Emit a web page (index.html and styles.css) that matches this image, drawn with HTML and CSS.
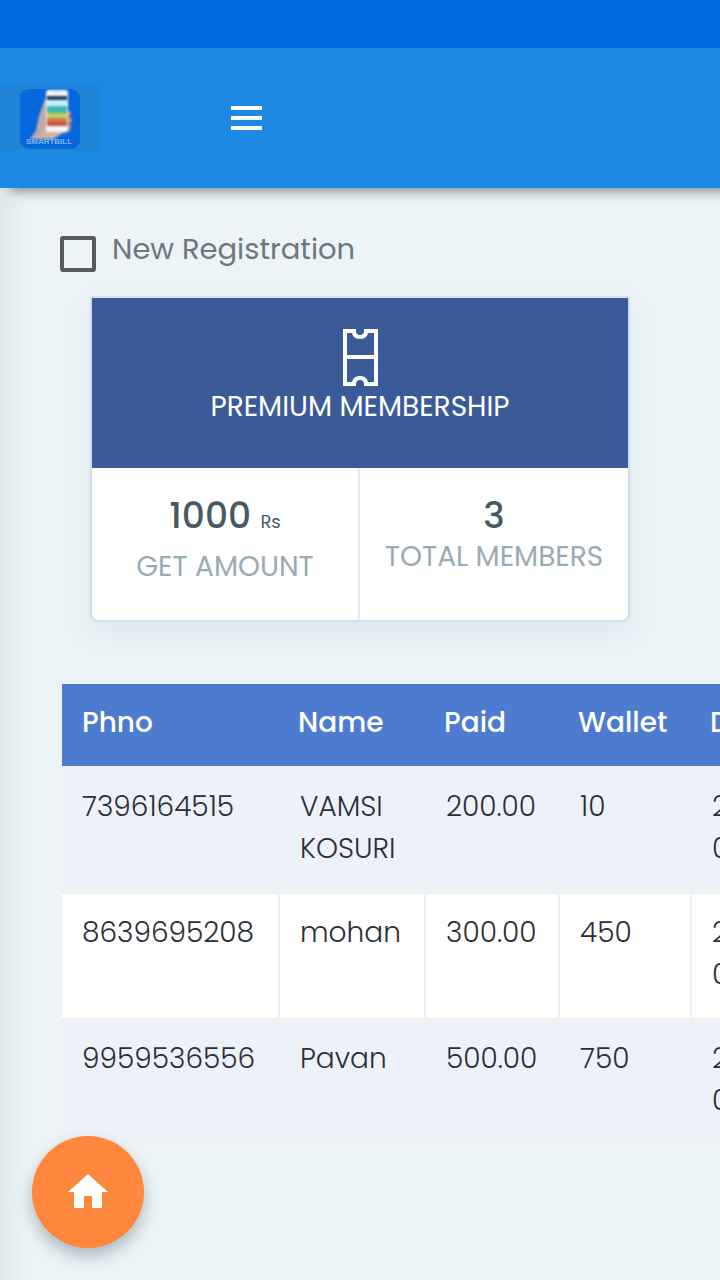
FILE: index.html
```html
<!DOCTYPE html>
<html lang="en">
<head>
<meta charset="utf-8">
<meta name="viewport" content="width=device-width, initial-scale=1">
<title>Premium Membership</title>
<link rel="stylesheet" href="styles.css">
</head>
<body>
<div class="status-bar"></div>
<header class="topbar">
  <a class="brand" href="#" aria-label="Home page">
    <svg class="logo" viewBox="0 0 60 60" aria-hidden="true">
      <rect width="60" height="60" rx="9" fill="#0767dc"/>
      <g class="logo-art">
        <path d="M25 10 L27 11 V38 H42 L49 38 L50 42 L43 44 L33 50 H14 L10 50 L16 42 L19 27 Z" fill="#d3b3a6"/>
        <path d="M25 12 L26 36 L18 49 H11 L18 40 L20 27 Z" fill="#bda8ac"/>
        <rect x="46" y="22" width="5" height="5" rx="2" fill="#c99078"/>
        <rect x="46" y="28" width="6" height="6" rx="2" fill="#c98d76"/>
        <rect x="46" y="35" width="5" height="6" rx="2" fill="#c98d76"/>
        <rect x="26" y="1" width="22" height="42" rx="3" fill="#f3f6fb"/>
        <rect x="33" y="3" width="8" height="1" fill="#c8d3dc"/>
        <rect x="27" y="7" width="20" height="4" fill="#203c50"/>
        <rect x="27" y="12" width="20" height="4" fill="#bcefff"/>
        <rect x="27" y="17" width="20" height="3" fill="#36b7c4"/>
        <rect x="27" y="20" width="20" height="4" fill="#41b7a4"/>
        <rect x="27" y="24" width="20" height="5" fill="#c4ce60"/>
        <rect x="27" y="29" width="20" height="4" fill="#d9784b"/>
        <rect x="27" y="33" width="20" height="4" fill="#bf563e"/>
      </g>
      <text class="logo-text" x="29" y="55" text-anchor="middle">SMARTBILL</text>
    </svg>
  </a>
  <button class="menu-button" type="button" aria-label="Open menu">
    <svg class="menu-icon" viewBox="0 0 31 24" aria-hidden="true"><path d="M0 2h31M0 12h31M0 22h31" stroke="#fff" stroke-width="4"/></svg>
  </button>
</header>
<main class="page">
  <div class="check-row">
    <input class="check-box" type="checkbox" id="new-registration">
    <label class="check-label" for="new-registration">New Registration</label>
  </div>
  <section class="card">
    <div class="card-head">
      <svg class="ticket-icon" viewBox="0 0 36 58" aria-hidden="true"><path d="M3 2H12Q12 8 18 8T24 2H34V55H24Q24 49 18 49T12 55H3ZM3 28H34" fill="none" stroke="#fff" stroke-width="4"/></svg>
      <h1 class="card-title">PREMIUM MEMBERSHIP</h1>
    </div>
    <div class="stats">
      <div class="stat stat-amount">
        <div class="stat-value">1000 <small class="unit">Rs</small></div>
        <div class="stat-label">GET AMOUNT</div>
      </div>
      <div class="stat">
        <div class="stat-value">3</div>
        <div class="stat-label">TOTAL MEMBERS</div>
      </div>
    </div>
  </section>
  <div class="table-scroll">
    <table class="members">
      <colgroup><col class="col-phone"><col class="col-name"><col class="col-paid"><col class="col-wallet"><col class="col-date"></colgroup>
      <thead>
        <tr><th scope="col">Phno</th><th scope="col">Name</th><th scope="col">Paid</th><th scope="col">Wallet</th><th scope="col">Date</th></tr>
      </thead>
      <tbody>
        <tr><td>7396164515</td><td>VAMSI KOSURI</td><td>200.00</td><td>10</td><td>2019<br>07:10</td></tr>
        <tr><td>8639695208</td><td>mohan</td><td>300.00</td><td>450</td><td>2019<br>07:10</td></tr>
        <tr><td>9959536556</td><td>Pavan</td><td>500.00</td><td>750</td><td>2019<br>07:10</td></tr>
      </tbody>
    </table>
  </div>
</main>
<button class="home-button" type="button" aria-label="Home">
  <svg class="home-icon" viewBox="0 0 40 34" aria-hidden="true"><path d="M20 0L0 18H6V34H16V22H24V34H34V18H40Z" fill="#fff"/></svg>
</button>
</body>
</html>
```
FILE: styles.css
```css
* { box-sizing: border-box; }

body {
  margin: 0;
  min-height: 100vh;
  display: flex;
  flex-direction: column;
  background: #ecf4f8;
  font-family: Poppins, Inter, "Open Sans", sans-serif;
  font-size: 28px;
  font-weight: 300;
  line-height: 42px;
  color: #2b2f36;
}

/* the bars stack over the page so that only the lower shadow shows */
.status-bar {
  position: relative;
  z-index: 2;
  height: 48px;
  background: #0069df;
}

.topbar {
  position: relative;
  z-index: 1;
  display: flex;
  align-items: center;
  gap: 124px;
  height: 140px;
  background: #1e88e5;
  box-shadow: 10px 2px 12px rgba(0, 0, 0, 0.5);
}

.brand {
  display: flex;
  width: 100px;
  padding: 4px 20px 2px;
  background: #1f83d6;
}

.logo { display: block; width: 60px; height: 60px; }
.logo-art { filter: blur(1px); }

.logo-text {
  font-family: "Liberation Sans", sans-serif;
  font-size: 8px;
  font-weight: 700;
  fill: #7db4f2;
}

.menu-button {
  display: flex;
  padding: 7px;
  border: 0;
  background: transparent;
}

.menu-icon { display: block; width: 31px; height: 24px; }

.page {
  flex: 1;
  padding: 38px 0 60px;
  background: linear-gradient(to right, #dfe8eb, #ecf4f8 28px);
}

.check-row {
  display: flex;
  align-items: flex-start;
  gap: 16px;
  padding-left: 60px;
}

.check-box {
  appearance: none;
  width: 36px;
  height: 36px;
  margin: 10px 0 0;
  border: 4px solid #5a5a5a;
  border-radius: 3px;
}

.check-label { padding-top: 2px; font-size: 29px; font-weight: 400; color: #6b787d; }

.card {
  margin: 24px 90px 62px;
  border: 2px solid #d3dfe7;
  border-radius: 2px 2px 8px 8px;
  background: #fff;
  box-shadow: 0 10px 32px rgba(70, 100, 120, 0.09);
}

.card-head {
  display: flex;
  flex-direction: column;
  align-items: center;
  height: 170px;
  padding-top: 31px;
  background: #3b5a98;
}

.ticket-icon { display: block; width: 36px; height: 58px; }

.card-title {
  margin: 0;
  font-size: 28px;
  font-weight: 400;
  line-height: 40px;
  color: #fff;
}

.stats { display: grid; grid-template-columns: 1fr 1fr; min-height: 152px; }
.stat { padding-top: 26px; text-align: center; white-space: nowrap; }
.stat-amount { border-right: 2px solid #e8ebee; }
.stat-value { font-size: 36px; font-weight: 500; line-height: 44px; color: #455a64; }
.unit { font-size: 18px; font-weight: 400; }
.stat-label { line-height: 38px; font-weight: 400; color: #99abb4; }
.stat-amount .stat-label { padding-top: 4px; }

.table-scroll { margin-left: 62px; overflow-x: auto; scrollbar-width: none; }

.members {
  width: 828px;
  table-layout: fixed;
  border-spacing: 0;
}

.col-phone { width: 216px; }
.col-name { width: 146px; }
.col-paid { width: 134px; }
.col-wallet { width: 132px; }

.members th {
  padding: 18px 20px 22px;
  background: #4d7bd0;
  color: #fff;
  font-weight: 500;
  text-align: left;
}

.members td {
  padding: 18px 20px 22px;
  border-top: 2px solid #f1f1f2;
  border-left: 2px solid #f1f1f2;
  background: #edf2fa;
  vertical-align: top;
}

.members td:first-child { border-left: 0; }
.members tr:last-child td { border-bottom: 2px solid #f1f1f2; }
.members tr:nth-child(even) td { background: #fff; }

.home-button {
  position: fixed;
  left: 32px;
  bottom: 32px;
  display: grid;
  place-items: center;
  width: 112px;
  height: 112px;
  padding: 0 0 2px;
  border: 0;
  border-radius: 50%;
  background: #ff883e;
  box-shadow: 0 8px 16px rgba(60, 75, 85, 0.36);
}

.home-icon { display: block; width: 40px; height: 34px; }
```
